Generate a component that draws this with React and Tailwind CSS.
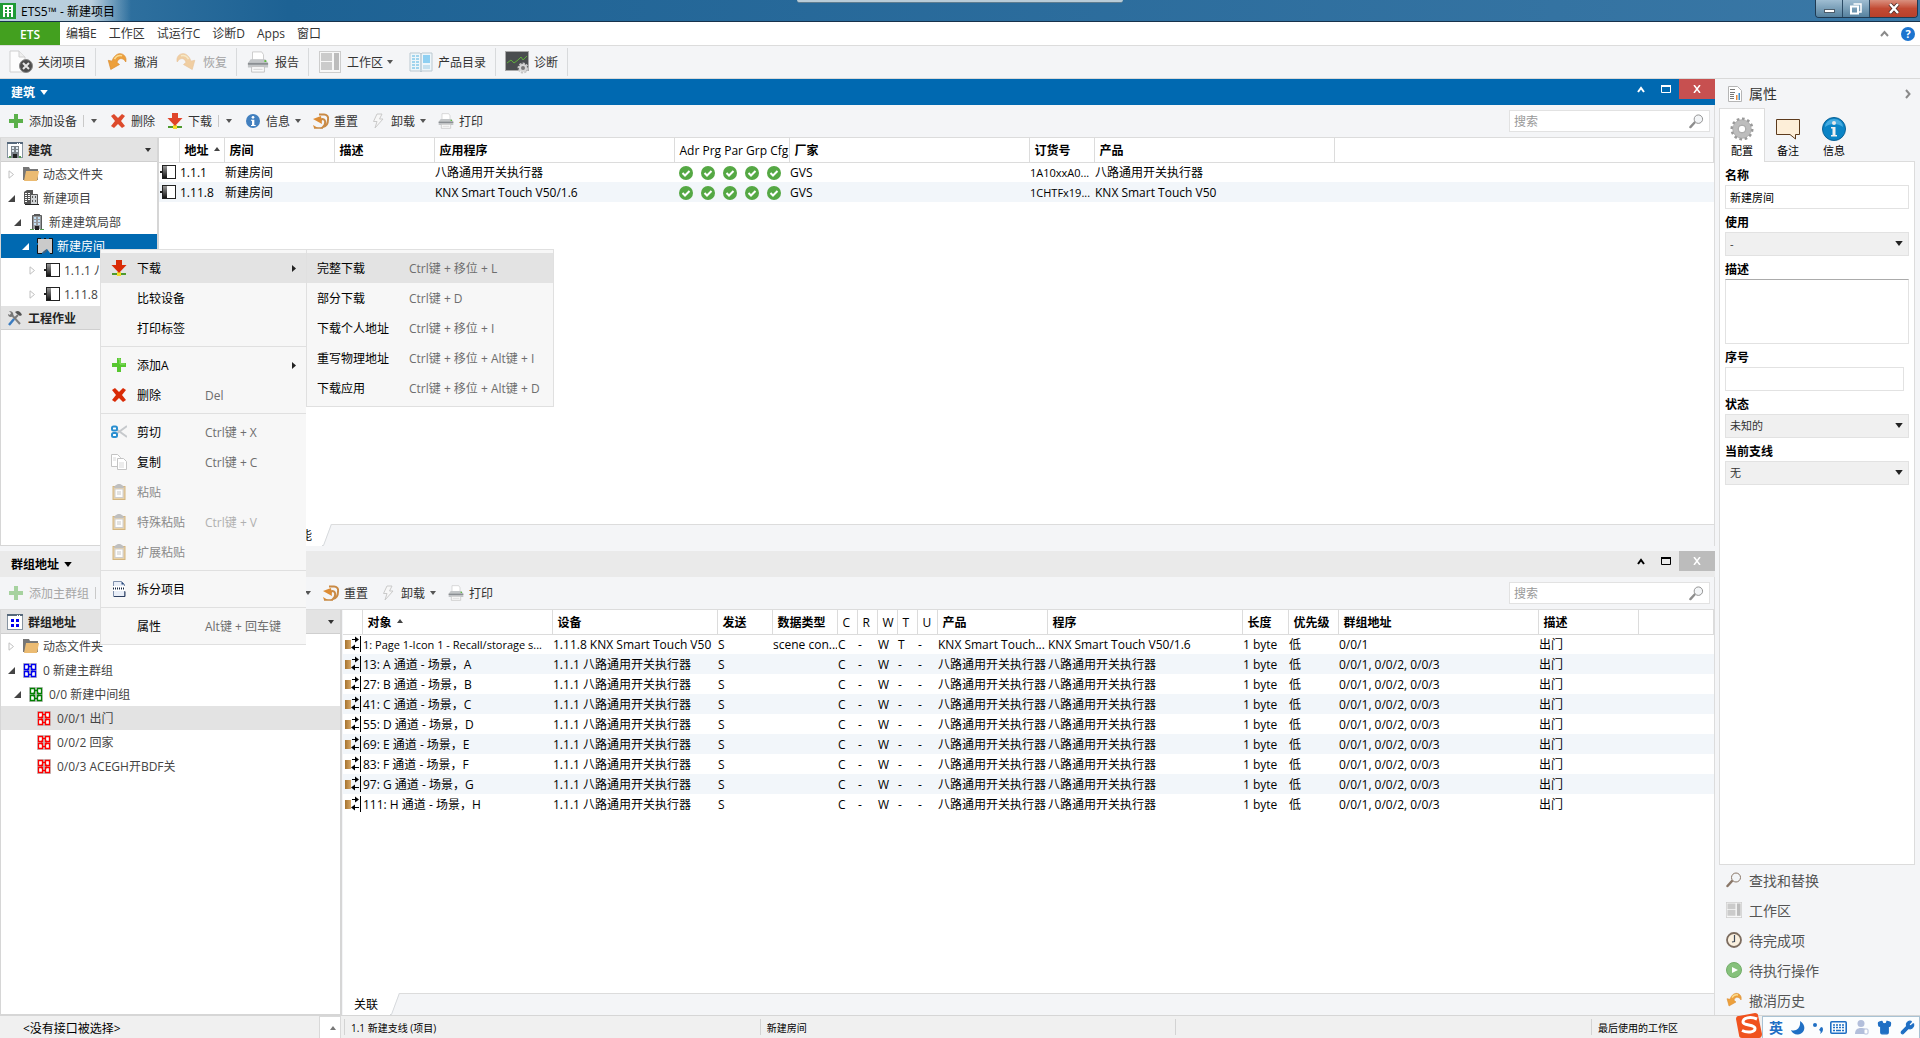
import {
  Moon,
  Shirt,
  Wrench,
} from "lucide-react";

/* ---------- ICONS ---------- */

function Caret({ large = false, className = "" }) {
  return (
    <svg width={large ? 8 : 6} height={large ? 5 : 4} viewBox="0 0 6 4" className={`shrink-0 ${className}`}>
      <path d="M0 0h6L3 4z" fill="currentColor" />
    </svg>
  );
}

function CloseProjectIcon() {
  return (
    <svg width="24" height="24" viewBox="0 0 24 24">
      <path d="M1 1h9l6 6v15H1z" fill="#fdfdfd" stroke="#cfcfcf" />
      <path d="M10 1v6h6" fill="#eee" stroke="#cfcfcf" />
      <circle cx="17" cy="16" r="6.500" fill="#4d4d4d" stroke="#8a8a8a" />
      <path d="M14 13l6 6M20 13l-6 6" stroke="#e6e6e6" strokeWidth="2" />
    </svg>
  );
}

function UndoIcon({ size = 24, flip = false, faded = false }) {
  return (
    <svg width={size} height={size} viewBox="0 0 24 24" opacity={faded ? 0.45 : 1}>
      <g transform={flip ? "matrix(-1 0 0 1 24 0)" : undefined}>
        <path
          d="M6 11C8 5 12 2 15.500 2C20.500 2 24 6.500 22.500 12C21 9 18.500 7.500 16 8C13.500 8.500 12.500 10.500 12 12.500L15 15L4.500 21L1.500 10z"
          fill="#eda03c"
          stroke="#d98a2e"
          strokeWidth="0.800"
        />
        <path d="M9 8.500C11 5 14 3.500 18 4.500" fill="none" stroke="#fadb8f" strokeWidth="2" />
      </g>
    </svg>
  );
}

function PrinterIcon({ size = 16 }) {
  return (
    <svg width={size} height={size} viewBox="0 0 24 24">
      <path d="M6 1h10l2 3v6H6z" fill="#fff" stroke="#c9c9c9" />
      <path d="M4 9h16l3 4v5H1v-5z" fill="#c2c5c7" />
      <path d="M1 13h22v2H1z" fill="#8b8f93" />
      <path d="M19 11h2" stroke="#5bbf3c" strokeWidth="2" />
      <path d="M5 17h14v6H5z" fill="#fafafa" stroke="#c0c0c0" />
      <path d="M7 20h10" stroke="#d0d0d0" />
    </svg>
  );
}

function WorkspaceIcon({ size = 22 }) {
  return (
    <svg width={size} height={size} viewBox="0 0 22 22">
      <rect x="0.500" y="0.500" width="21" height="21" fill="#f7f7f7" stroke="#cdcdcd" />
      <path d="M2 2h11v8H2zM2 11h11v8H2z" fill="#cbcbcb" />
      <path d="M15 2h5v17h-5z" fill="#bcbcbc" />
    </svg>
  );
}

function CatalogIcon() {
  return (
    <svg width="24" height="22" viewBox="0 0 24 22">
      <path d="M1 2h10l1 1 1-1h10v18H13l-1 1-1-1H1z" fill="#eef6fa" stroke="#bcc9d1" />
      <path d="M12 3v17" stroke="#9fb3bf" />
      <path d="M3 5h3M3 8h3M3 11h3M3 14h3M3 17h3M7 5h3M7 8h3M7 11h3M7 14h3M7 17h3" stroke="#55b2e0" />
      <path d="M14 4h7v8h-7z" fill="#8fd0f2" />
      <path d="M14 15h7M14 17h7" stroke="#9ccbe3" />
    </svg>
  );
}

function DiagnosticsIcon() {
  return (
    <svg width="24" height="24" viewBox="0 0 24 24">
      <rect x="0.500" y="1.500" width="23" height="19" fill="#4a4d4f" stroke="#a9a9a9" />
      <path d="M2 13l4-3 3 3 4-3 3-3 2 3 4-4" fill="none" stroke="#5fae3c" />
      <circle cx="18" cy="18" r="4" fill="none" stroke="#c4c4c4" strokeWidth="3" strokeDasharray="2 1" />
      <circle cx="18" cy="18" r="3" fill="#777" stroke="#d6d6d6" strokeWidth="2" />
    </svg>
  );
}

function PlusIcon({ faded = false, bright = false }) {
  return (
    <svg width="16" height="16" viewBox="0 0 16 16" opacity={faded ? 0.5 : 1}>
      <path d="M6 1h4v5h5v4h-5v5H6v-5H1V6h5z" fill={bright ? "#57c72f" : "#5bb04a"} />
      {bright && <path d="M7 2h2v5h5" fill="none" stroke="#8fe070" />}
    </svg>
  );
}

function CrossIcon({ color = "#dd4a2c" }) {
  return (
    <svg width="16" height="16" viewBox="0 0 16 16">
      <path d="M4 1l4 4 4-4 3 2-4 5 4 5-3 2-4-4-4 4-3-2 4-5-4-5z" fill={color} />
    </svg>
  );
}

function DownloadIcon({ color = "#e0452a" }) {
  return (
    <svg width="16" height="16" viewBox="0 0 16 16">
      <path d="M1 14h14" stroke="#4f9a2e" strokeWidth="2" />
      <path d="M6 12h4v4H6z" fill="#f2dc2b" />
      <path d="M5 0h6v5h4.500L8 13L.5 5H5z" fill={color} />
    </svg>
  );
}

function InfoIcon({ size = 16 }) {
  return (
    <svg width={size} height={size} viewBox="0 0 24 24">
      <circle cx="12" cy="12" r="10.500" fill="#4380bf" />
      <circle cx="12" cy="6.500" r="2" fill="#fff" />
      <path d="M9 10h5v8h2v1.500H9V18h1.500v-6.500H9z" fill="#fff" />
    </svg>
  );
}

function ResetIcon() {
  return (
    <svg width="16" height="16" viewBox="0 0 16 16">
      <path d="M6 1.500h5a4 4 0 0 1 4 5c0 4-2 7-5 7.500c2-2 2.500-4 2-6c-.5-2-3-2.500-4-1l-1 2" fill="none" stroke="#c98a45" strokeWidth="2" />
      <path d="M0 6l8-3 1 8z" fill="#dd8c34" />
      <path d="M0 12l5 3H1z" fill="#dd8c34" />
      <path d="M1 15h9" stroke="#c98a45" strokeWidth="1.500" />
    </svg>
  );
}

function BoltIcon() {
  return (
    <svg width="16" height="16" viewBox="0 0 16 16">
      <path d="M7 1h5L9.500 6H13L5 15l2-6.500H3.500z" fill="#f7f7f7" stroke="#cacaca" />
    </svg>
  );
}

function SearchIcon({ color = "#8d8d8d", size = 15 }) {
  return (
    <svg width={size} height={size} viewBox="0 0 16 16" className="shrink-0">
      <path d="M6 9L1.500 14" stroke={color} strokeWidth="2.500" strokeLinecap="round" />
      <circle cx="10" cy="5.500" r="4.500" fill="#f3f5f7" stroke={color} />
    </svg>
  );
}

function FolderIcon() {
  return (
    <svg width="16" height="16" viewBox="0 0 16 16">
      <path d="M0 1h6l1 2h8v11H0z" fill="#767676" />
      <path d="M3 5h13l-2 10H1z" fill="#ebbb72" />
    </svg>
  );
}

function ProjectIcon() {
  return (
    <svg width="16" height="16" viewBox="0 0 16 16">
      <path d="M1 2l3-2h6v14H1z" fill="#555" />
      <path d="M2 3h2v1H2zM5 3h2v1H5zM2 5h2v1H2zM5 5h2v1H5zM2 7h2v1H2zM5 7h2v1H5zM2 9h2v1H2zM5 9h2v1H5zM2 11h2v1H2z" fill="#fff" />
      <path d="M7.500 4.500h7v10h-7z" fill="#d0d3d5" stroke="#555" />
      <path d="M9 6h1v2H9zM12 6h1v2h-1zM9 10h1v2H9zM12 10h1v2h-1z" fill="#555" />
      <path d="M2 14.500h14" stroke="#222" />
    </svg>
  );
}

function BuildingIcon() {
  return (
    <svg width="16" height="16" viewBox="0 0 16 16">
      <path d="M3.500 15V1.500h9V15" fill="#96999c" stroke="#5a5a5a" />
      <path d="M5 .5h6" stroke="#5a5a5a" />
      <path d="M5 3h2v2H5zM9 3h2v2H9zM5 6h2v2H5zM9 6h2v2H9zM5 9h2v2H5zM9 9h2v2H9z" fill="#c3e0f4" />
      <path d="M6 12h4v4H6z" fill="#222" />
      <path d="M1 15.500h4M11 15.500h4" stroke="#559b52" />
    </svg>
  );
}

function RoomIcon() {
  return (
    <svg width="16" height="16" viewBox="0 0 16 16">
      <path d="M1 1h14v14h-2l-3-4-5 4H1z" fill="#cacaca" />
      <path d="M4 .5H.5V5M.5 7v8.500H5M7 .5h2M12 .5h3.500V15.500H13" fill="none" stroke="#111" />
      <path d="M6 15l4-3" stroke="#3f6180" strokeWidth="2" />
    </svg>
  );
}

function DeviceIcon() {
  return (
    <svg width="16" height="14" viewBox="0 0 16 14">
      <defs>
        <linearGradient id="dev" x1="0" y1="0" x2="0" y2="1">
          <stop offset="0" stopColor="#999" />
          <stop offset="1" stopColor="#111" />
        </linearGradient>
      </defs>
      <path d="M0 6h2v2H0z" fill="#222" />
      <rect x="2.500" y="0.500" width="13" height="13" fill="#fff" stroke="#222" />
      <path d="M3 1h4v12H3z" fill="url(#dev)" />
    </svg>
  );
}

function WindowIcon({ children }) {
  return (
    <svg width="16" height="16" viewBox="0 0 16 16">
      <rect x="0.500" y="0.500" width="15" height="15" fill="#fff" stroke="#8794a1" />
      <path d="M0 0h16v2H0z" fill="#56687b" />
      <path d="M10 1h1v1h-1zM12 1h1v1h-1z" fill="#fff" />
      {children}
    </svg>
  );
}

function ToolsIcon() {
  return (
    <svg width="16" height="16" viewBox="0 0 16 16">
      <path d="M4 4l9 10" stroke="#808080" strokeWidth="2" />
      <path d="M2 1l2 2-1 2-2-1c0 3 3 4 5 2c1-2 0-5-4-5z" fill="#777" />
      <path d="M8 2c3-2 5-1 7 3l-2 1-3-2z" fill="#555" />
      <path d="M11 5L7 9" stroke="#777" strokeWidth="2" />
      <path d="M7 9l-5 6" stroke="#3b7cc0" strokeWidth="2.500" />
    </svg>
  );
}

function GroupIcon({ color }) {
  return (
    <svg width="15" height="15" viewBox="0 0 15 15">
      <path d="M0 0h14v15H0z" fill="#c4c4c4" />
      <g fill="#fff" stroke={color} strokeWidth="1.300">
        <path d="M1.500 1.500h4v5h-4zM8.500 1.500h4v5h-4zM1.500 8.500h4v5h-4zM8.500 8.500h4v5h-4z" />
      </g>
      <path d="M5 5h4v5H5z" fill="#c4c4c4" />
      <path d="M4 6.500h1.500V5M8.500 5v1.500H10M4 8.500h1.500V10M8.500 10V8.500H10M6 3.500h2M6 11.500h2" fill="none" stroke={color} strokeWidth="1.300" />
    </svg>
  );
}

function ObjectIcon() {
  return (
    <svg width="17" height="16" viewBox="0 0 17 16">
      <defs>
        <linearGradient id="obj" x1="0" x2="1">
          <stop offset="0" stopColor="#a5732f" />
          <stop offset="1" stopColor="#d9a968" />
        </linearGradient>
      </defs>
      <path d="M1 4h6v9H1z" fill="url(#obj)" />
      <path d="M8 3.500h5M10 11.500h5" stroke="#000" />
      <path d="M11 .5l4 3-4 3zM11 8.500l-4 3 4 3z" fill="#000" />
      <path d="M16.500 0v16" stroke="#000" />
    </svg>
  );
}

function CheckIcon() {
  return (
    <svg width="14" height="14" viewBox="0 0 14 14">
      <circle cx="7" cy="7" r="7" fill="#55a844" />
      <path d="M3.500 7l2.500 2.500 4.500-4.500" fill="none" stroke="#fff" strokeWidth="2" />
    </svg>
  );
}

function ScissorsIcon() {
  return (
    <svg width="16" height="16" viewBox="0 0 16 16">
      <path d="M5 5l11 8M5 10l11-8" stroke="#c6c9cc" strokeWidth="2" />
      <rect x="1" y="2.500" width="5" height="4" rx="1.500" fill="#fff" stroke="#2a8fd0" strokeWidth="2" />
      <rect x="1" y="9" width="5" height="4" rx="1.500" fill="#fff" stroke="#2a8fd0" strokeWidth="2" />
    </svg>
  );
}

function CopyIcon() {
  return (
    <svg width="16" height="16" viewBox="0 0 16 16">
      <path d="M.5.5h6l3 3v9h-9z" fill="#fff" stroke="#c4c4c4" />
      <path d="M6.500 4.500h6l3 3v8h-9z" fill="#fff" stroke="#c4c4c4" />
      <path d="M2 4h3M2 6h3M8 9h5M8 11h5M8 13h5" stroke="#d8d8d8" />
    </svg>
  );
}

function PasteIcon() {
  return (
    <svg width="16" height="16" viewBox="0 0 16 16">
      <rect x="2" y="2.500" width="12" height="13" fill="#e6c995" stroke="#cba564" />
      <rect x="4" y="5" width="8" height="8.500" fill="#fff" stroke="#c4c4c4" />
      <path d="M6 8h4M6 10h4" stroke="#bdbdbd" />
      <path d="M3 4c0-2 3-4 5-4s5 2 5 4z" fill="#b2b2b2" />
    </svg>
  );
}

function SplitIcon() {
  return (
    <svg width="16" height="16" viewBox="0 0 16 16">
      <path d="M2.500.5h8l3 3v12h-11z" fill="#e9eef7" stroke="#8090ab" />
      <path d="M10.500.5v3h3z" fill="#2c4d80" />
      <path d="M2 5h12v5H2z" fill="#fff" />
      <path d="M2 7.500h12" stroke="#1b2b44" strokeWidth="2" strokeDasharray="1 1" />
      <path d="M3 15.500h11v-5" fill="none" stroke="#2c3e60" />
    </svg>
  );
}

function GearIcon() {
  return (
    <svg width="24" height="24" viewBox="0 0 24 24">
      <circle cx="12" cy="12" r="10" fill="none" stroke="#999" strokeWidth="3" strokeDasharray="2.600 2.600" />
      <circle cx="12" cy="12" r="6.500" fill="none" stroke="#bdbdbd" strokeWidth="5.500" />
      <circle cx="12" cy="12" r="9.300" fill="none" stroke="#a0a0a0" strokeWidth="0.700" />
      <circle cx="12" cy="12" r="3.800" fill="#fff" stroke="#8a8a8a" strokeWidth="0.800" />
    </svg>
  );
}

function CommentIcon() {
  return (
    <svg width="24" height="24" viewBox="0 0 24 24">
      <path d="M.5 2.500h23v15h-4v4.500l-5.500-4.500H.5z" fill="#fdeed8" stroke="#5c3a1c" />
    </svg>
  );
}

function BigInfoIcon() {
  return (
    <svg width="24" height="24" viewBox="0 0 24 24">
      <circle cx="12" cy="12" r="11.500" fill="#0a84c6" stroke="#0b6296" />
      <path d="M3 10a9 8 0 0 1 18 0c-5-4-13-4-18 0z" fill="#46abe0" />
      <circle cx="12" cy="6" r="2" fill="#e9e9e9" />
      <path d="M9 10h4.500v8H15v1.500H9V18h1.500v-6.500H9z" fill="#f0f0f0" />
    </svg>
  );
}

function ClockIcon() {
  return (
    <svg width="16" height="16" viewBox="0 0 16 16">
      <circle cx="8" cy="8" r="7" fill="#faf0df" stroke="#7c6c5f" strokeWidth="1.800" />
      <path d="M8.500 3v6.500l-2.500.5" fill="none" stroke="#3f4a5a" strokeWidth="1.200" />
    </svg>
  );
}

function PlayIcon() {
  return (
    <svg width="16" height="16" viewBox="0 0 16 16">
      <circle cx="8" cy="8" r="7.500" fill="#86c17c" stroke="#73ad69" />
      <path d="M6 5l6 3-6 3z" fill="#fff" />
    </svg>
  );
}

function ReportPageIcon() {
  return (
    <svg width="14" height="16" viewBox="0 0 14 16">
      <path d="M.5.500h9l4 4v11H.5z" fill="#fff" stroke="#b5b5b5" />
      <path d="M2 3.500h5M2 6.500h5M2 8.500h4M2 10.500h4M2 12.500h4" stroke="#777" />
      <path d="M8 9h1.500v5H8z" fill="#e98a3a" />
      <path d="M10.500 7H12v7h-1.500z" fill="#3a8fd0" />
    </svg>
  );
}

/* ---------- DATA ---------- */

const menuBar = ["编辑E", "工作区", "试运行C", "诊断D", "Apps", "窗口"];

const deviceColumns = [
  { label: "", width: "w-[20px]" },
  { label: "地址", width: "w-[45px]", sorted: true },
  { label: "房间", width: "w-[110px]" },
  { label: "描述", width: "w-[100px]" },
  { label: "应用程序", width: "w-[240px]" },
  { label: "Adr Prg Par Grp Cfg", width: "w-[115px]", latin: true },
  { label: "厂家", width: "w-[240px]" },
  { label: "订货号", width: "w-[65px]" },
  { label: "产品", width: "w-[240px]" },
  { label: "", width: "" },
];

const checks = (
  <span className="flex gap-2 pl-1">
    <CheckIcon />
    <CheckIcon />
    <CheckIcon />
    <CheckIcon />
    <CheckIcon />
  </span>
);

const small = (text) => <span className="text-[11px]">{text}</span>;

const deviceRows = [
  ["1.1.1", "新建房间", "", "八路通用开关执行器", checks, "GVS", small("1A10xxA0..."), "八路通用开关执行器", ""],
  ["1.11.8", "新建房间", "", "KNX Smart Touch V50/1.6", checks, "GVS", small("1CHTFx19..."), "KNX Smart Touch V50", ""],
];

const objectColumns = [
  { label: "", width: "w-[19px]" },
  { label: "对象", width: "w-[190px]", sorted: true },
  { label: "设备", width: "w-[165px]" },
  { label: "发送", width: "w-[55px]" },
  { label: "数据类型", width: "w-[65px]" },
  { label: "C", width: "w-[20px]", latin: true },
  { label: "R", width: "w-[20px]", latin: true },
  { label: "W", width: "w-[20px]", latin: true },
  { label: "T", width: "w-[20px]", latin: true },
  { label: "U", width: "w-[20px]", latin: true },
  { label: "产品", width: "w-[110px]" },
  { label: "程序", width: "w-[195px]" },
  { label: "长度", width: "w-[46px]" },
  { label: "优先级", width: "w-[50px]" },
  { label: "群组地址", width: "w-[200px]" },
  { label: "描述", width: "w-[100px]" },
  { label: "", width: "" },
];

const channels = [
  ["13", "A"],
  ["27", "B"],
  ["41", "C"],
  ["55", "D"],
  ["69", "E"],
  ["83", "F"],
  ["97", "G"],
  ["111", "H"],
];

const objectRows = [
  [small("1: Page 1-Icon 1 - Recall/storage s..."), "1.11.8 KNX Smart Touch V50", "S", "scene con...", "C", "-", "W", "T", "-", "KNX Smart Touch...", "KNX Smart Touch V50/1.6", "1 byte", "低", "0/0/1", "出门", ""],
  ...channels.map(([no, ch]) => [
    `${no}: ${ch} 通道 - 场景，${ch}`,
    "1.1.1 八路通用开关执行器",
    "S",
    "",
    "C",
    "-",
    "W",
    "-",
    "-",
    "八路通用开关执行器",
    "八路通用开关执行器",
    "1 byte",
    "低",
    "0/0/1, 0/0/2, 0/0/3",
    "出门",
    "",
  ]),
];

const contextMenu = [
  { label: "下载", icon: <DownloadIcon color="#d92b06" />, arrow: true, active: true },
  { label: "比较设备" },
  { label: "打印标签" },
  { separator: true },
  { label: "添加A", icon: <PlusIcon bright />, arrow: true },
  { label: "删除", icon: <CrossIcon color="#d92b06" />, keys: "Del" },
  { separator: true },
  { label: "剪切", icon: <ScissorsIcon />, keys: "Ctrl键 + X" },
  { label: "复制", icon: <CopyIcon />, keys: "Ctrl键 + C" },
  { label: "粘贴", icon: <PasteIcon />, disabled: true },
  { label: "特殊粘贴", icon: <PasteIcon />, keys: "Ctrl键 + V", disabled: true },
  { label: "扩展粘贴", icon: <PasteIcon />, disabled: true },
  { separator: true },
  { label: "拆分项目", icon: <SplitIcon /> },
  { separator: true },
  { label: "属性", keys: "Alt键 + 回车键" },
];

const downloadMenu = [
  { label: "完整下载", keys: "Ctrl键 + 移位 + L", active: true },
  { label: "部分下载", keys: "Ctrl键 + D" },
  { label: "下载个人地址", keys: "Ctrl键 + 移位 + I" },
  { label: "重写物理地址", keys: "Ctrl键 + 移位 + Alt键 + I" },
  { label: "下载应用", keys: "Ctrl键 + 移位 + Alt键 + D" },
];

const sideLinks = [
  { label: "查找和替换", icon: <SearchIcon color="#8a7768" size={16} /> },
  { label: "工作区", icon: <WorkspaceIcon size={16} /> },
  { label: "待完成项", icon: <ClockIcon /> },
  { label: "待执行操作", icon: <PlayIcon /> },
  { label: "撤消历史", icon: <UndoIcon size={16} /> },
];

/* ---------- WINDOW CHROME ---------- */

function TitleBar() {
  return (
    <header className="relative h-[22px] flex justify-between shrink-0 border-b border-[#17324c] bg-linear-to-r from-[#3a7aa6] via-[#1d6294] via-15% to-[#3a78a6]">

      <div className="flex items-center gap-[5px] pr-4 bg-linear-to-r from-[#b9cfdd] from-70% to-transparent">
        <svg width="16" height="16" viewBox="0 0 16 16">
          <path d="M0 0h16v16H0z" fill="#1f9a36" />
          <path d="M3 2h10v12H3z" fill="#fff" />
          <path d="M5 4h2v2H5zM9 4h2v2H9zM5 7h2v2H5zM9 7h2v2H9zM5 10h2v4H5zM9 10h2v4H9z" fill="#1f9a36" />
        </svg>
        <h1 className="pt-0.5 text-black">ETS5™ - 新建项目</h1>
      </div>

      <div className="absolute left-1/2 -translate-x-1/2 top-0 w-[326px] h-[3px] rounded-b bg-[#b9ccd8] border-b border-[#5f7d90]" />

      <div className="flex h-[18px] mr-0.5 rounded-b border border-t-0 border-[#1f3a52] overflow-hidden">
        <button aria-label="最小化" className="w-[27px] flex items-center justify-center bg-linear-to-b from-[#9fbdd2] to-[#56829f] border-r border-[#2b4b66]">
          <span className="w-[11px] h-1 mt-1 bg-white border border-[#4c5d6b]" />
        </button>
        <button aria-label="还原" className="w-[27px] flex items-center justify-center bg-linear-to-b from-[#9fbdd2] to-[#56829f] border-r border-[#2b4b66]">
          <svg width="12" height="12" viewBox="0 0 12 12">
            <path d="M3.500 1h7.500v8H9" fill="none" stroke="#fff" strokeWidth="1.500" />
            <rect x="1" y="3.500" width="7" height="7" fill="none" stroke="#fff" strokeWidth="2" />
          </svg>
        </button>
        <button aria-label="关闭" className="w-[47px] flex items-center justify-center bg-linear-to-b from-[#d9907f] via-[#c24a33] to-[#b8402b]">
          <svg width="12" height="11" viewBox="0 0 12 11">
            <path d="M2 1l8 9M10 1L2 10" stroke="#4b2a26" strokeWidth="4" />
            <path d="M2 1l8 9M10 1L2 10" stroke="#fff" strokeWidth="2.500" />
          </svg>
        </button>
      </div>

    </header>
  );
}

function MenuBar() {
  return (
    <nav className="h-6 flex items-center shrink-0 bg-white border-b border-[#dcdcdc]">
      <button className="w-[60px] self-stretch pt-0.5 bg-[#43a01f] text-white font-semibold">
        ETS
      </button>
      <div className="flex gap-3 pl-[6px] pt-px">
        {menuBar.map((item) => (
          <button key={item}>{item}</button>
        ))}
      </div>
      <div className="ml-auto flex items-center gap-3 pr-[5px]">
        <button aria-label="收起">
          <svg width="9" height="7" viewBox="0 0 9 7">
            <path d="M1 6l3.500-4L8 6" fill="none" stroke="#8a8a8a" strokeWidth="2" />
          </svg>
        </button>
        <button aria-label="帮助" className="size-[14px] rounded-full bg-[#1c74cf] text-white text-[11px] leading-[14px] font-bold">
          ?
        </button>
      </div>
    </nav>
  );
}

function MainButton({ icon, label, disabled = false, caret = false }) {
  return (
    <button className={`flex items-center px-2 ${disabled ? "text-[#a3a3a3]" : "text-[#333]"}`}>
      <span className="w-6 mr-[5px] flex justify-center">{icon}</span>
      <span className="pt-0.5">{label}</span>
      {caret && <Caret className="ml-1 text-[#555]" />}
    </button>
  );
}

function MainSeparator() {
  return <span className="w-px h-7 mx-px bg-[#d8dadc]" />;
}

function MainToolbar() {
  return (
    <div className="h-[33px] flex items-center pl-px shrink-0 border-b border-[#d9d9d9]">
      <MainButton icon={<CloseProjectIcon />} label="关闭项目" />
      <MainSeparator />
      <MainButton icon={<UndoIcon size={20} />} label="撤消" />
      <MainButton icon={<UndoIcon size={20} flip faded />} label="恢复" disabled />
      <MainSeparator />
      <MainButton icon={<PrinterIcon size={22} />} label="报告" />
      <MainSeparator />
      <MainButton icon={<WorkspaceIcon />} label="工作区" caret />
      <MainButton icon={<CatalogIcon />} label="产品目录" />
      <MainSeparator />
      <MainButton icon={<DiagnosticsIcon />} label="诊断" />
      <MainSeparator />
    </div>
  );
}

/* ---------- PANEL PARTS ---------- */

function PanelTitle({ title, active = false }) {
  return (
    <div className={`h-[26px] flex items-center justify-between pl-[11px] shrink-0 ${active ? "bg-[#0069b1] text-white" : "bg-[#eaeaea] text-black"}`}>
      <button className="flex items-center gap-[5px] font-bold">
        <span className="pt-0.5">{title}</span>
        <Caret large />
      </button>
      <div className="flex self-start h-5 items-center">
        <button aria-label="收起面板" className="mr-4">
          <svg width="8" height="7" viewBox="0 0 8 7">
            <path d="M1 6l3-4 3 4" fill="none" stroke="currentColor" strokeWidth="2" />
          </svg>
        </button>
        <button aria-label="最大化面板" className="mr-2">
          <svg width="10" height="8" viewBox="0 0 10 8">
            <path d="M.5.500h9v7h-9z" fill="none" stroke="currentColor" />
            <path d="M0 1h10" stroke="currentColor" strokeWidth="2" />
          </svg>
        </button>
        <button aria-label="关闭面板" className={`w-9 h-5 flex items-center justify-center text-white ${active ? "bg-[#c75050]" : "bg-[#bcbcbc]"}`}>
          <svg width="8" height="8" viewBox="0 0 8 8">
            <path d="M1 0l6 8M7 0L1 8" stroke="currentColor" strokeWidth="1.500" />
          </svg>
        </button>
      </div>
    </div>
  );
}

function ToolButton({ icon, label, caret = false, disabled = false }) {
  return (
    <button className={`flex items-center px-[6px] ${disabled ? "text-[#a6a6a6]" : "text-[#333]"}`}>
      <span className="w-4 mr-[5px]">{icon}</span>
      <span className="pt-0.5">{label}</span>
      {caret && <Caret className="ml-[5px] text-[#555]" />}
    </button>
  );
}

function SplitCaret({ label }) {
  return (
    <>
      <span className="w-px h-3 bg-[#c9c9c9]" />
      <button aria-label={label} className="px-[7px] text-[#555]">
        <Caret />
      </button>
    </>
  );
}

function PanelToolbar({ children, searchId }) {
  return (
    <div className="h-8 flex items-center justify-between pl-[2px] pr-1 border-r border-[#dcdcdc] shrink-0">
      <div className="flex items-center">
        {children}
        <ToolButton icon={<ResetIcon />} label="重置" />
        <ToolButton icon={<BoltIcon />} label="卸载" caret />
        <ToolButton icon={<PrinterIcon />} label="打印" />
      </div>
      <div className="w-[201px] h-[22px] flex items-center bg-white border border-[#e2e2e2] pl-1 pr-[5px]">
        <input
          id={searchId}
          type="text"
          aria-label="搜索"
          placeholder="搜索"
          className="flex-1 min-w-0 pt-0.5 outline-none placeholder:text-[#999]"
        />
        <SearchIcon />
      </div>
    </div>
  );
}

function TreeHeader({ icon, title, caret = false }) {
  return (
    <div className="h-6 flex items-center pl-[6px] pr-[6px] bg-[#e3e3e3] border-b border-[#cfcfcf] font-bold text-[#222]">
      <span className="mr-[5px]">{icon}</span>
      <span className="pt-0.5">{title}</span>
      {caret && <Caret className="ml-auto text-[#333]" />}
    </div>
  );
}

function Expander({ state }) {
  if (state === "open") {
    return (
      <svg width="7" height="7" viewBox="0 0 7 7">
        <path d="M7 0v7H0z" fill="currentColor" />
      </svg>
    );
  }
  if (state === "closed") {
    return (
      <svg width="7" height="9" viewBox="0 0 7 9">
        <path d="M1 .8v7.400l4.500-3.700z" fill="#fff" stroke="#c0c0c0" />
      </svg>
    );
  }
  return null;
}

function TreeItem({ indent, state, icon, label, className = "text-[#444]" }) {
  return (
    <li className={`h-6 flex items-center whitespace-nowrap overflow-hidden ${indent} ${className}`}>
      <span className="w-[7px] mr-2 flex justify-center shrink-0">
        <Expander state={state} />
      </span>
      <span className="w-4 mr-1 shrink-0">{icon}</span>
      <span className="pt-0.5">{label}</span>
    </li>
  );
}

function DataTable({ columns, rows, rowIcon }) {
  return (
    <table className="w-full table-fixed border-collapse text-left text-black whitespace-nowrap">
      <colgroup>
        {columns.map((col, i) => (
          <col key={i} className={col.width} />
        ))}
      </colgroup>
      <thead>
        <tr className="h-6">
          {columns.map((col, i) => (
            <th
              key={i}
              className={`p-0 pl-[5px] pt-0.5 border-b border-r border-[#dcdcdc] overflow-hidden ${col.latin ? "font-normal" : "font-bold"}`}
            >
              {col.sorted ? (
                <span className="flex items-center gap-[5px]">
                  {col.label}
                  <Caret className="rotate-180 -mt-1 text-[#444]" />
                </span>
              ) : (
                col.label
              )}
            </th>
          ))}
        </tr>
      </thead>
      <tbody>
        {rows.map((row, r) => (
          <tr key={r} className="h-5 odd:bg-white even:bg-[#f2f6fa]">
            <td className="p-0 pl-px">{rowIcon}</td>
            {row.map((cell, c) => (
              <td key={c} className="p-0 pl-px pt-0.5 overflow-hidden">
                {cell}
              </td>
            ))}
          </tr>
        ))}
      </tbody>
    </table>
  );
}

function TabStrip({ label, className }) {
  return (
    <div className="h-[22px] flex shrink-0">
      <div className={`bg-white flex items-center text-black ${className}`}>
        <span className="pt-0.5">{label}</span>
      </div>
      <svg width="10" height="22" viewBox="0 0 10 22">
        <path d="M0 0h9L1 22H0z" fill="#fff" />
        <path d="M9.500 0L1.500 21.500H0" fill="none" stroke="#d6d9dc" />
      </svg>
      <div className="flex-1 border-t border-[#dcdcdc]" />
    </div>
  );
}

/* ---------- PANELS ---------- */

function BuildingPanel() {
  return (
    <section className="flex-[467] min-h-0 flex flex-col pb-[5px]">
      <PanelTitle title="建筑" active />
      <PanelToolbar searchId="search-devices">
        <ToolButton icon={<PlusIcon />} label="添加设备" />
        <SplitCaret label="添加选项" />
        <ToolButton icon={<CrossIcon />} label="删除" />
        <ToolButton icon={<DownloadIcon />} label="下载" />
        <SplitCaret label="下载选项" />
        <ToolButton icon={<InfoIcon />} label="信息" caret />
      </PanelToolbar>

      <div className="flex-1 min-h-0 flex border-t border-[#dcdcdc]">
        <aside className="w-[159px] shrink-0 bg-white border border-t-0 border-[#d6d6d6] border-r-2">
          <TreeHeader
            icon={
              <WindowIcon>
                <path d="M4 4h8v12H4z" fill="#7d858c" />
                <path d="M5 5h2v2H5zM9 5h2v2H9zM5 8h2v2H5zM9 8h2v2H9z" fill="#dfe9f0" />
                <path d="M6 12h4v4H6z" fill="#222" />
                <path d="M2 15h2M12 15h2" stroke="#559b52" strokeWidth="2" />
              </WindowIcon>
            }
            title="建筑"
            caret
          />
          <ul>
            <TreeItem indent="pl-[7px]" state="closed" icon={<FolderIcon />} label="动态文件夹" />
            <TreeItem indent="pl-[7px]" state="open" icon={<ProjectIcon />} label="新建项目" />
            <TreeItem indent="pl-[13px]" state="open" icon={<BuildingIcon />} label="新建建筑局部" />
            <TreeItem indent="pl-[21px]" state="open" icon={<RoomIcon />} label="新建房间" className="bg-[#0069b1] text-white" />
            <TreeItem indent="pl-[28px]" state="closed" icon={<DeviceIcon />} label="1.1.1 八" />
            <TreeItem indent="pl-[28px]" state="closed" icon={<DeviceIcon />} label="1.11.8" />
          </ul>
          <TreeHeader icon={<ToolsIcon />} title="工程作业" />
        </aside>

        <div className="flex-1 min-w-0 flex flex-col border-r border-[#dcdcdc]">
          <div className="flex-1 min-h-0 overflow-hidden bg-white">
            <DataTable columns={deviceColumns} rows={deviceRows} rowIcon={<DeviceIcon />} />
          </div>
          <TabStrip label="能" className="w-[163px] justify-end pr-[10px]" />
        </div>
      </div>
    </section>
  );
}

function GroupPanel() {
  return (
    <section className="flex-[464] min-h-0 flex flex-col">
      <PanelTitle title="群组地址" />
      <PanelToolbar searchId="search-groups">
        <ToolButton icon={<PlusIcon faded />} label="添加主群组" disabled />
        <SplitCaret label="添加选项" />
        <button aria-label="信息" className="w-[201px] flex justify-end px-[6px] text-[#555]">
          <Caret />
        </button>
      </PanelToolbar>

      <div className="flex-1 min-h-0 flex border-t border-[#dcdcdc]">
        <aside className="w-[342px] shrink-0 bg-white border border-t-0 border-[#d6d6d6] border-r-2">
          <TreeHeader
            icon={
              <WindowIcon>
                <path d="M4 5h3v3H4zM9 5h3v3H9zM4 10h3v3H4zM9 10h3v3H9z" fill="#0000f0" />
              </WindowIcon>
            }
            title="群组地址"
            caret
          />
          <ul>
            <TreeItem indent="pl-[7px]" state="closed" icon={<FolderIcon />} label="动态文件夹" />
            <TreeItem indent="pl-[7px]" state="open" icon={<GroupIcon color="#0000f0" />} label="0 新建主群组" />
            <TreeItem indent="pl-[13px]" state="open" icon={<GroupIcon color="#008000" />} label="0/0 新建中间组" />
            <TreeItem indent="pl-[21px]" icon={<GroupIcon color="#ff0000" />} label="0/0/1 出门" className="bg-[#e3e3e3] text-[#444]" />
            <TreeItem indent="pl-[21px]" icon={<GroupIcon color="#ff0000" />} label="0/0/2 回家" />
            <TreeItem indent="pl-[21px]" icon={<GroupIcon color="#ff0000" />} label="0/0/3 ACEGH开BDF关" />
          </ul>
        </aside>

        <div className="flex-1 min-w-0 flex flex-col pl-px border-r border-[#dcdcdc]">
          <div className="flex-1 min-h-0 overflow-hidden bg-white">
            <DataTable columns={objectColumns} rows={objectRows} rowIcon={<ObjectIcon />} />
          </div>
          <TabStrip label="关联" className="pl-[11px] pr-3" />
        </div>
      </div>
    </section>
  );
}

/* ---------- PROPERTIES ---------- */

function Field({ id, label, children }) {
  return (
    <div>
      <label htmlFor={id} className="block h-[23px] pt-1 leading-5 font-bold text-black">
        {label}
      </label>
      {children}
    </div>
  );
}

function SelectBox({ id, value }) {
  return (
    <div className="relative">
      <select id={id} className="w-full h-6 block appearance-none bg-[#f0f0f0] border border-[#e2e2e2] pl-1 text-[11px] text-[#333]">
        <option>{value}</option>
      </select>
      <Caret large className="absolute right-[6px] top-[9px] text-[#222]" />
    </div>
  );
}

function PropertiesPanel() {
  return (
    <aside className="w-[205px] shrink-0 flex flex-col pl-1 pr-[5px]">

      <div className="h-[29px] flex items-center pl-[9px] text-sm text-[#333]">
        <ReportPageIcon />
        <h2 className="ml-[7px]">属性</h2>
        <button aria-label="收起属性" className="ml-auto mr-1">
          <svg width="6" height="10" viewBox="0 0 6 10">
            <path d="M1 1l3.500 4L1 9" fill="none" stroke="#8a8a8a" strokeWidth="2" />
          </svg>
        </button>
      </div>

      <div role="tablist" className="flex h-[53px] text-[11px] text-black">
        <button role="tab" className="w-[46px] -mb-px z-10 pt-2 flex flex-col items-center bg-white border border-b-0 border-[#dcdcdc]">
          <GearIcon />
          <span className="leading-5">配置</span>
        </button>
        <button role="tab" className="w-[46px] pt-[9px] flex flex-col items-center">
          <CommentIcon />
          <span className="leading-5">备注</span>
        </button>
        <button role="tab" className="w-[46px] pt-[9px] flex flex-col items-center">
          <BigInfoIcon />
          <span className="leading-5">信息</span>
        </button>
      </div>

      <form className="flex-1 px-[5px] bg-white border border-[#dcdcdc]">
        <Field id="name" label="名称">
          <input id="name" type="text" defaultValue="新建房间" className="w-full h-6 block px-1 border border-[#e2e2e2] text-[11px] text-black" />
        </Field>
        <Field id="usage" label="使用">
          <SelectBox id="usage" value="-" />
        </Field>
        <Field id="description" label="描述">
          <textarea id="description" className="w-full h-[65px] block resize-none border border-[#e2e2e2] border-t-[#ababab]" />
        </Field>
        <Field id="serial" label="序号">
          <input id="serial" type="text" className="w-[179px] h-6 block border border-[#e2e2e2]" />
        </Field>
        <Field id="status" label="状态">
          <SelectBox id="status" value="未知的" />
        </Field>
        <Field id="line" label="当前支线">
          <SelectBox id="line" value="无" />
        </Field>
      </form>

      <ul className="text-sm text-[#555]">
        {sideLinks.map((item) => (
          <li key={item.label}>
            <button className="h-[30px] flex items-center gap-[7px] pl-[7px]">
              {item.icon}
              <span className="pt-0.5">{item.label}</span>
            </button>
          </li>
        ))}
      </ul>

    </aside>
  );
}

/* ---------- CONTEXT MENU ---------- */

function MenuArrow() {
  return (
    <svg width="4" height="7" viewBox="0 0 4 7" className="ml-auto mr-[10px]">
      <path d="M0 0l4 3.500L0 7z" fill="#222" />
    </svg>
  );
}

function ContextMenu() {
  return (
    <div className="absolute left-[100px] top-[249px] z-20 flex items-start text-black">

      <div role="menu" className="w-[206px] py-[3px] bg-[#f7f7f7] border border-r-0 border-[#e0e0e0]">
        {contextMenu.map((item, i) =>
          item.separator ? (
            <div key={i} className="h-[7px] flex items-center">
              <span className="w-full h-px bg-[#e0e0e0]" />
            </div>
          ) : (
            <button
              key={i}
              role="menuitem"
              className={`w-full h-[30px] flex items-center pl-[10px] ${item.active ? "bg-[#e3e3e3]" : ""} ${item.disabled ? "text-[#8a8a8a]" : ""}`}
            >
              <span className={`w-4 mr-[10px] ${item.disabled ? "opacity-80" : ""}`}>{item.icon}</span>
              <span className="w-[68px] pt-0.5 text-left">{item.label}</span>
              <span className={`pt-0.5 ${item.disabled ? "text-[#b0b0b0]" : "text-[#6e6e6e]"}`}>{item.keys}</span>
              {item.arrow && <MenuArrow />}
            </button>
          )
        )}
      </div>

      <div role="menu" className="w-[248px] py-[3px] bg-[#f7f7f7] border border-[#e0e0e0]">
        {downloadMenu.map((item) => (
          <button
            key={item.label}
            role="menuitem"
            className={`w-full h-[30px] flex items-center pl-[10px] ${item.active ? "bg-[#e3e3e3]" : ""}`}
          >
            <span className="w-[92px] pt-0.5 text-left">{item.label}</span>
            <span className="pt-0.5 text-[#6e6e6e] whitespace-nowrap">{item.keys}</span>
          </button>
        ))}
      </div>

    </div>
  );
}

/* ---------- STATUS BAR ---------- */

function InputMethodBar() {
  return (
    <div className="absolute right-0 bottom-0 z-10 h-[22px] w-[158px] flex items-center justify-between pl-[6px] pr-1 bg-[#fbfdfe] border border-b-0 border-[#a9c2d3] text-[#1f6fc4]">
      <svg width="30" height="26" viewBox="0 0 30 26" className="absolute -left-[29px] bottom-0">
        <path d="M2 7c0-2 1-3 3-3L21 1c2 0 3 1 3 2l4 19c0 2-1 4-3 4H8c-2 0-3-1-3-3z" fill="#f0521e" />
        <path d="M23 7C16 4 9 6 9 10c0 4 12 2 12 6.500c0 4-8 4.500-13 2" fill="none" stroke="#fff" strokeWidth="3" />
      </svg>
      <span className="text-sm font-bold">英</span>
      <svg width="14" height="14" viewBox="0 0 14 14">
        <path d="M9 0c7 4 5 13-2 13.500c-3 .3-6-1.500-7-4.500c5 2 10-2 9-9z" fill="currentColor" />
      </svg>
      <svg width="10" height="12" viewBox="0 0 10 12">
        <circle cx="2" cy="3" r="2" fill="currentColor" />
        <path d="M8 5a2 2 0 0 1 2 2c0 2-1 4-3 5c1-2 1-3-1-4z" fill="currentColor" />
      </svg>
      <svg width="17" height="13" viewBox="0 0 17 13">
        <rect x="0.800" y="0.800" width="15.400" height="11.400" rx="1" fill="none" stroke="currentColor" strokeWidth="1.600" />
        <path d="M3 4h2M6 4h2M9 4h2M12 4h2M3 6.500h2M6 6.500h2M9 6.500h2M12 6.500h2M3 9.500h2M6 9.500h5M12 9.500h2" stroke="currentColor" strokeWidth="1.500" />
      </svg>
      <svg width="14" height="15" viewBox="0 0 14 15" className="text-[#b3bfdb]">
        <circle cx="6" cy="3.500" r="3.500" fill="currentColor" />
        <path d="M0 14c0-4 2-6 6-6s4 1 4 1v5z" fill="currentColor" />
        <rect x="9" y="9" width="4" height="5" rx="1" fill="#fff" stroke="currentColor" />
      </svg>
      <Shirt size={15} fill="currentColor" />
      <Wrench size={15} fill="currentColor" />
    </div>
  );
}

function StatusBar() {
  return (
    <footer className="relative h-[23px] shrink-0 flex items-stretch bg-[#f0f0f0] border-t border-[#d6d6d6] text-[10px] text-black">
      <div className="w-[341px] shrink-0 flex items-center justify-between pl-[23px] text-xs">
        <span className="pt-1">&lt;没有接口被选择&gt;</span>
        <button aria-label="选择接口" className="w-[22px] self-stretch flex items-center justify-end pr-1 bg-white border border-b-0 border-[#d9d9d9]">
          <Caret className="rotate-180 text-[#777]" />
        </button>
      </div>
      <div className="flex-1 grid grid-cols-[1fr_1fr_1fr_329px] items-center *:h-4 *:pt-[3px] *:leading-3 *:pl-[6px] *:border-l *:border-[#d3d3d3] pl-[3px]">
        <span>1.1 新建支线 (项目)</span>
        <span>新建房间</span>
        <span />
        <span>最后使用的工作区</span>
      </div>
      <InputMethodBar />
    </footer>
  );
}

export default function App() {
  return (
    <div className="relative h-screen flex flex-col overflow-hidden bg-[#f4f5f7] text-xs text-[#333] font-['Open_Sans','Noto_Sans_CJK_SC',sans-serif]">

      <TitleBar />
      <MenuBar />
      <MainToolbar />

      <div className="flex-1 min-h-0 flex">
        <main className="flex-1 min-w-0 flex flex-col">
          <BuildingPanel />
          <GroupPanel />
        </main>
        <PropertiesPanel />
      </div>

      <StatusBar />
      <ContextMenu />

    </div>
  );
}
